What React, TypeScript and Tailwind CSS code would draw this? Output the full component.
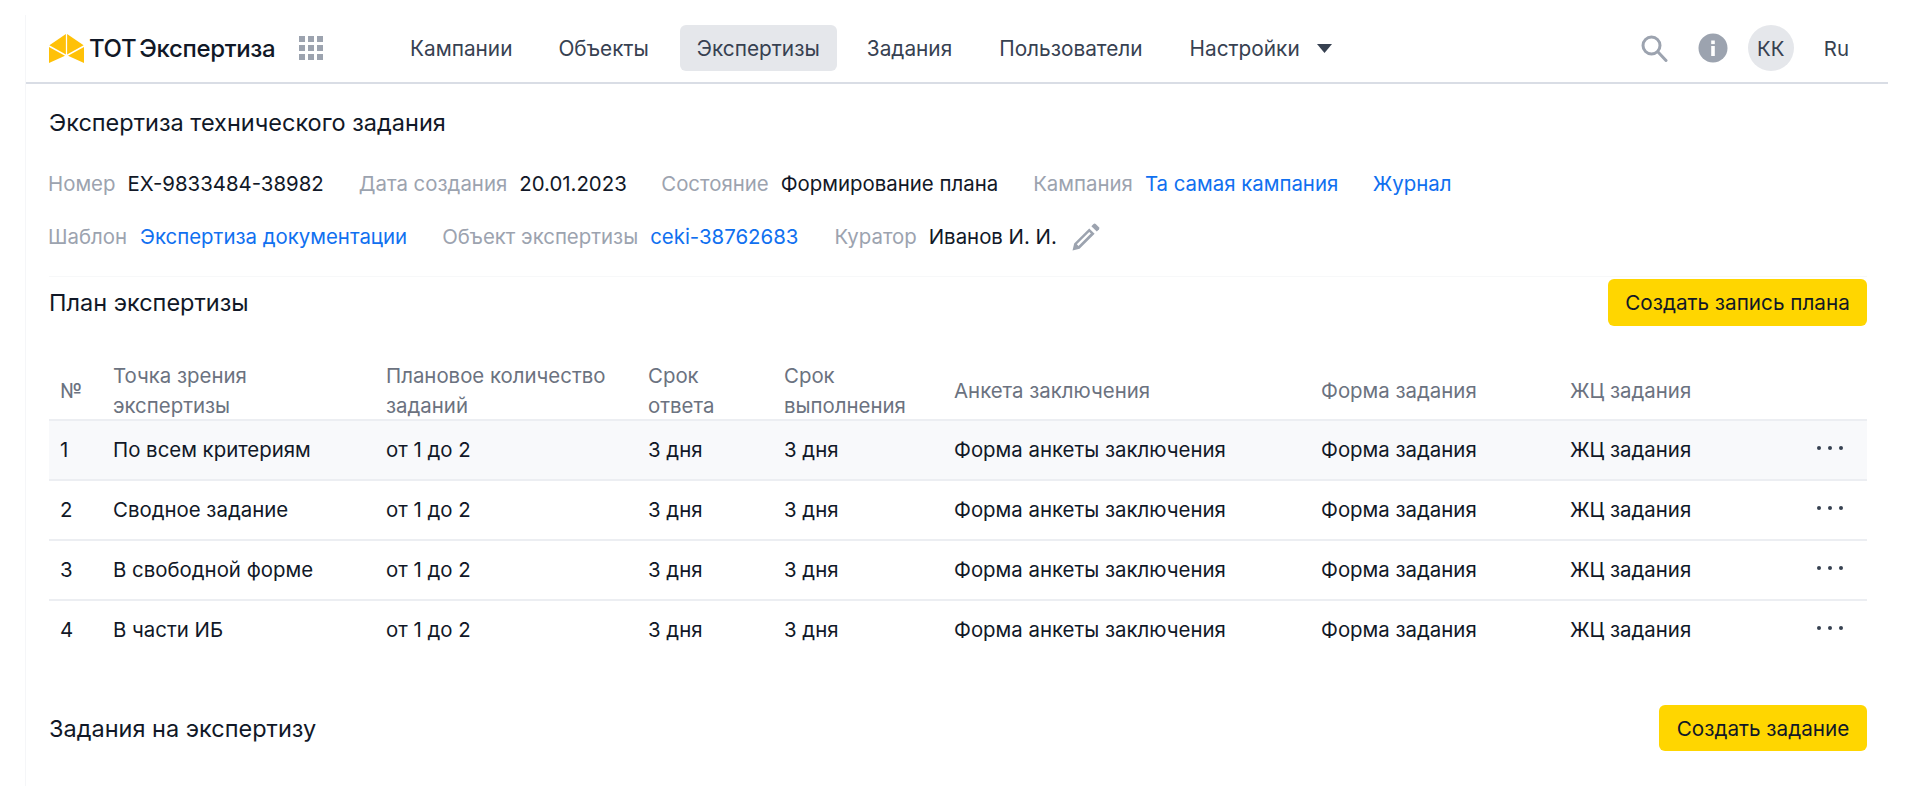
import React from "react";

const rows = ["По всем критериям", "Сводное задание", "В свободной форме", "В части ИБ"];
const cols = "grid grid-cols-[64px_273px_262px_136px_170px_367px_249px_1fr]";

function Logo() {
  return (
    <svg width="35" height="29" viewBox="0 0 35 29" className="shrink-0">
      <g fill="#FFC107">
        <path d="M16.9 0 L0.4 11.2 L16.9 20.4 Z" />
        <path d="M18.1 0 L34.6 11.2 L18.1 20.4 Z" />
        <path d="M0 13 L16 21.8 L0 29 Z" />
        <path d="M35 13 L19 21.8 L35 29 Z" />
      </g>
    </svg>
  );
}

function Grid() {
  return (
    <svg width="24" height="24" viewBox="0 0 24 24" fill="#9CA3AF" className="shrink-0">
      {[0, 9, 18].map((y) =>
        [0, 9, 18].map((x) => <rect key={`${x}-${y}`} x={x} y={y} width="6" height="6" />)
      )}
    </svg>
  );
}

function Meta({ label, value, link, className }: { label: string; value: string; link?: boolean; className?: string }) {
  return (
    <div className={`flex gap-3 ${className ?? ""}`}>
      <span className="text-[#9CA3AF]">{label}</span>
      <span className={link ? "text-[#1070F0]" : "text-[#111827]"}>{value}</span>
    </div>
  );
}

export default function App() {
  return (
    <div className="h-[786px] overflow-hidden bg-white font-['Inter',sans-serif] text-[20.4px] leading-[27px] text-[#111827]">
      <div className="ml-[25px] mr-[32px] mt-[15px] h-[771px] border-l border-[#f5f6f8]">
        <header className="flex h-[69px] items-start border-b-2 border-[#d9dde5] pl-[23px] pr-[39px] pt-[10px]">
          <div className="flex h-[46px] w-[274px] shrink-0 items-center">
            <Logo />
            <span className="ml-[5px] whitespace-nowrap text-[24px] font-medium tracking-[-0.35px] [word-spacing:-3px] text-[#111827]">ТОТ Экспертиза</span>
            <span className="ml-[24px]"><Grid /></span>
          </div>
          <nav className="ml-[87px] flex h-[46px] items-center text-[20.8px] text-[#374151]">
            <span>Кампании</span>
            <span className="ml-[46px]">Объекты</span>
            <span className="ml-[31px] flex h-[46px] w-[157px] items-center justify-center rounded-[6px] bg-[#E5E7EB]">Экспертизы</span>
            <span className="ml-[30px]">Задания</span>
            <span className="ml-[47px]">Пользователи</span>
            <span className="ml-[47px]">Настройки</span>
            <svg width="15" height="9" viewBox="0 0 15 9" className="ml-[17px]"><path d="M0 0 H15 L7.5 9 Z" fill="#374151" /></svg>
          </nav>
          <div className="ml-auto flex h-[46px] items-center">
            <svg width="27" height="27" viewBox="0 0 27 27" fill="none" stroke="#9CA3AF" strokeWidth="3" className="mr-[30px]">
              <circle cx="10.5" cy="10.5" r="8.5" />
              <path d="M16.8 16.8 L25 25.5" strokeLinecap="round" />
            </svg>
            <svg width="30" height="30" viewBox="0 0 30 30" className="mr-[20px]">
              <circle cx="15" cy="15" r="14.5" fill="#9CA3AF" />
              <rect x="13.2" y="13" width="3.6" height="10" fill="#fff" />
              <rect x="13.2" y="7.5" width="3.6" height="3.6" fill="#fff" />
            </svg>
            <span className="flex h-[46px] w-[46px] items-center justify-center rounded-full bg-[#E5E7EB] text-[#374151]">КК</span>
            <span className="ml-[30px] text-[#374151]">Ru</span>
          </div>
        </header>

        <main className="pl-[23px] pr-[21px]">
          <h1 className="mt-[25px] h-[27px] text-[23.5px] font-normal leading-[27px] text-[#111827]">Экспертиза технического задания</h1>
          <div className="-ml-px mt-[34px] flex h-[27px] items-center">
            <Meta label="Номер" value="EX-9833484-38982" />
            <Meta label="Дата создания" value="20.01.2023" className="ml-[35px]" />
            <Meta label="Состояние" value="Формирование плана" className="ml-[34.5px]" />
            <Meta label="Кампания" value="Та самая кампания" link className="ml-[35px]" />
            <span className="ml-[34.5px] text-[#1070F0]">Журнал</span>
          </div>
          <div className="-ml-px mt-[26px] flex h-[27px] items-center">
            <Meta label="Шаблон" value="Экспертиза документации" link className="gap-[13px]" />
            <Meta label="Объект экспертизы" value="ceki-38762683" link className="ml-[35px]" />
            <Meta label="Куратор" value="Иванов И. И." className="ml-[36px]" />
            <svg width="28" height="28" viewBox="0 0 26 26" className="ml-[15px]" fill="#9CA3AF">
              <path d="M18 3 L20 1 A1.5 1.5 0 0 1 22 1 L25 4 A1.5 1.5 0 0 1 25 6 L23 8 Z" />
              <path fillRule="evenodd" d="M16 5 L21 10 L7 24 L0.5 25.5 L2 19 Z M16 8.3 L4.5 19.8 L6 21.3 L17.5 9.8 Z" />
            </svg>
          </div>

          <section className="mt-[26px] border-t border-[#f7f8f9]">
            <div className="mt-[2px] flex h-[47px] items-center justify-between">
              <h2 className="text-[23.5px] font-normal">План экспертизы</h2>
              <button className="flex h-[47px] w-[259px] items-center justify-center rounded-[6px] bg-[#FFD600] text-[20.7px] text-[#111827]">Создать запись плана</button>
            </div>

            <div className={`${cols} mt-[35px] h-[60px] items-center border-b-2 border-[#ECEEF2] leading-[30px] text-[#6B7280]`}>
              <span className="pl-[11px]">№</span>
              <span>Точка зрения<br />экспертизы</span>
              <span>Плановое количество<br />заданий</span>
              <span>Срок<br />ответа</span>
              <span>Срок<br />выполнения</span>
              <span>Анкета заключения</span>
              <span>Форма задания</span>
              <span>ЖЦ задания</span>
            </div>
            {rows.map((name, i) => (
              <div key={name} className={`${cols} h-[60px] items-center border-b-2 pb-[2px] ${i < 3 ? "border-[#ECEEF2]" : "border-transparent"} ${i === 0 ? "bg-[#F8F9FB]" : ""}`}>
                <span className="pl-[11px]">{i + 1}</span>
                <span>{name}</span>
                <span>от 1 до 2</span>
                <span>3 дня</span>
                <span>3 дня</span>
                <span>Форма анкеты заключения</span>
                <span>Форма задания</span>
                <span className="flex items-center justify-between pr-[23px]">
                  <span>ЖЦ задания</span>
                  <svg width="28" height="6" viewBox="0 0 28 6" fill="#374151" className="-mt-[2px]">
                    <circle cx="3" cy="3" r="2" /><circle cx="14" cy="3" r="2" /><circle cx="25" cy="3" r="2" />
                  </svg>
                </span>
              </div>
            ))}

            <div className="mt-[44px] flex h-[46px] items-center justify-between">
              <h2 className="text-[23.5px] font-normal">Задания на экспертизу</h2>
              <button className="flex h-[46px] w-[208px] items-center justify-center rounded-[6px] bg-[#FFD600] text-[20.7px] text-[#111827]">Создать задание</button>
            </div>
          </section>
        </main>
      </div>
    </div>
  );
}
